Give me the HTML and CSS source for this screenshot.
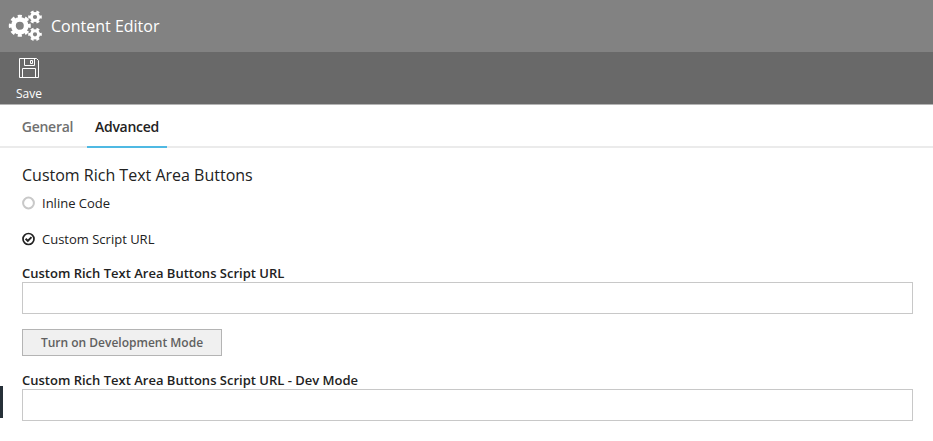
FILE: index.html
```html
<!DOCTYPE html>
<html lang="en">
<head>
<meta charset="utf-8">
<title>Content Editor</title>
<link rel="stylesheet" href="styles.css">
</head>
<body>
<header class="header">
  <svg class="gears" width="34" height="32" viewBox="0 0 34 32">
    <g fill="none" stroke="#fff">
      <circle cx="10.8" cy="15.8" r="6.4" stroke-width="4.8"/>
      <circle cx="10.8" cy="15.8" r="9.1" stroke-width="3.8" pathLength="16" stroke-dasharray="1.1 .9" stroke-dashoffset=".55"/>
      <circle cx="26" cy="7" r="3.6" stroke-width="3"/>
      <circle cx="26" cy="7" r="5.4" stroke-width="2.8" pathLength="12" stroke-dasharray="1 1" stroke-dashoffset=".5"/>
      <circle cx="26" cy="24.3" r="3.6" stroke-width="3"/>
      <circle cx="26" cy="24.3" r="5.4" stroke-width="2.8" pathLength="12" stroke-dasharray="1 1" stroke-dashoffset=".5"/>
    </g>
  </svg>
  <h1 class="title">Content Editor</h1>
</header>
<div class="toolbar">
  <button class="save">
    <svg width="22" height="22" viewBox="0 0 22 22" fill="none" stroke="#fff">
      <path d="M1.5 .5H18.5L20.5 2.5V19.5H1.5ZM6.5 .5V7.5H16.5V.5M4.5 19.5V10.5H17.5V19.5M12.5 2.5H14.5V5.5H12.5Z"/>
    </svg>
    <span>Save</span>
  </button>
</div>
<nav class="tabs">
  <a class="tab">General</a>
  <a class="tab tab-active">Advanced</a>
</nav>
<main class="content">
  <h2 class="section-title">Custom Rich Text Area Buttons</h2>
  <div class="option option-first">
    <svg width="13" height="13" viewBox="0 0 13 13" fill="none"><circle cx="6.5" cy="6" r="5.4" stroke="#c8c8c8" stroke-width="2"/></svg>
    <span>Inline Code</span>
  </div>
  <div class="option">
    <svg width="13" height="13" viewBox="0 0 13 13" fill="none" stroke="#222"><circle cx="6.5" cy="6" r="5.5" stroke-width="1.7"/><path d="M3.6 5.8L5.8 7.9L9.5 4.1" stroke-width="2"/></svg>
    <span>Custom Script URL</span>
  </div>
  <label class="label" for="script-url">Custom Rich Text Area Buttons Script URL</label>
  <input class="field" id="script-url" type="text">
  <button class="button">Turn on Development Mode</button>
  <label class="label label-dev" for="dev-url">Custom Rich Text Area Buttons Script URL - Dev Mode</label>
  <input class="field" id="dev-url" type="text">
</main>
<div class="edge-handle"></div>
</body>
</html>
```
FILE: styles.css
```css
* { box-sizing: border-box; }
body {
  margin: 0;
  height: 441px;
  overflow: hidden;
  background: #fff;
  color: #222;
  font: 13px/18px "Open Sans", sans-serif;
}
h1, h2 { margin: 0; font-weight: 400; }
button, input { font-family: inherit; margin: 0; border-radius: 0; }
svg { display: block; flex: none; overflow: visible; }
.header {
  display: flex;
  align-items: center;
  height: 52px;
  padding-left: 9px;
  background: #828282;
}
.title { margin-left: 8px; color: #fff; font-size: 16px; line-height: 22px; }
.toolbar {
  height: 53px;
  padding-left: 16px;
  background: #696969;
  border-bottom: 1px solid #b4b4b4;
}
.save {
  display: flex;
  flex-direction: column;
  align-items: center;
  padding: 6px 0 0;
  border: 0;
  background: none;
  color: #fff;
  font-size: 12px;
  line-height: 16px;
}
.save span { margin-top: 6px; }
.tabs {
  display: flex;
  height: 43px;
  padding-left: 14px;
  border-bottom: 2px solid #ebebeb;
}
.tab {
  height: 43px;
  width: 67px;
  text-align: center;
  font-size: 14px;
  font-weight: 600;
  letter-spacing: -0.27px;
  line-height: 44px;
  color: #707070;
}
.tab-active {
  width: 80px;
  margin-left: 6px;
  color: #222;
  border-bottom: 2px solid #4fb9e3;
}
.content { padding: 16px 20px 0 22px; }
.section-title { font-size: 16px; line-height: 22px; }
.option { display: flex; align-items: center; gap: 7px; margin-top: 18px; }
.option-first { margin-top: 8px; }
.label {
  display: block;
  margin-top: 16px;
  font-weight: 600;
  line-height: 18px;
}
.label-dev { margin-top: 15px; }
.field {
  display: block;
  width: 100%;
  height: 32px;
  border: 1px solid #c8c8c8;
  background: #fff;
}
.button {
  display: block;
  width: 200px;
  height: 27px;
  margin-top: 15px;
  padding: 0;
  border: 1px solid #b4b4b4;
  background: #f0f0f0;
  color: #606060;
  font-size: 12px;
  font-weight: 600;
}
.edge-handle {
  position: absolute;
  left: 0;
  top: 386px;
  width: 3px;
  height: 32px;
  background: #263038;
}
```
